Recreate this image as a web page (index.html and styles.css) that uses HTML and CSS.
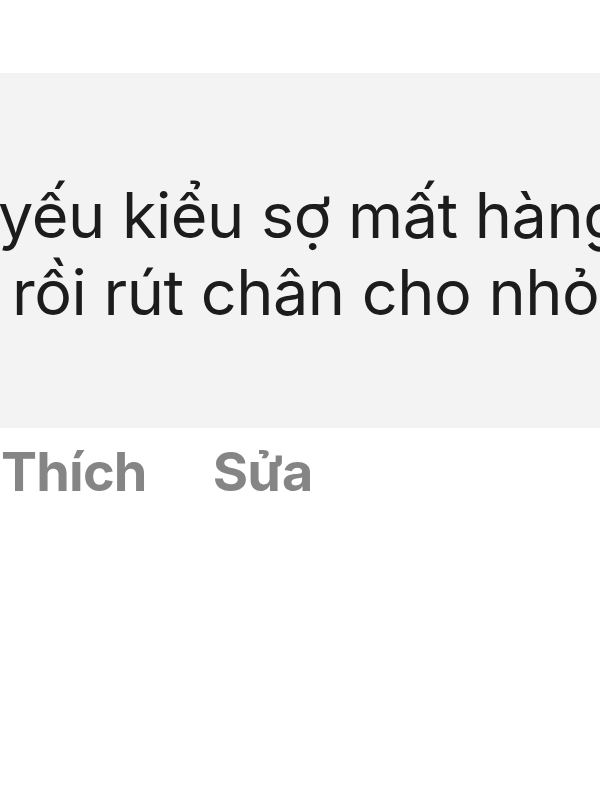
FILE: index.html
```html
<!DOCTYPE html>
<html lang="vi">
<head>
<meta charset="utf-8">
<link rel="stylesheet" href="styles.css">
</head>
<body>
<div class="page">
  <div class="bubble">
    <div class="line line1">yếu kiểu sợ mất hàng</div>
    <div class="line line2">rồi rút chân cho nhỏ</div>
  </div>
  <div class="actions">
    <span class="act">Thích</span>
    <span class="act">Sửa</span>
  </div>
</div>
</body>
</html>
```

FILE: styles.css
```css
html, body {
  margin: 0;
  padding: 0;
  background: #ffffff;
}
.page {
  width: 600px;
  height: 800px;
  overflow: hidden;
  padding-top: 73px;
  box-sizing: border-box;
  font-family: Inter, "Noto Sans", sans-serif;
}
.bubble {
  background: #f3f3f3;
  height: 355px;
  overflow: hidden;
  padding-top: 104px;
  box-sizing: border-box;
}
.line {
  white-space: nowrap;
  font-size: 63px;
  line-height: 77px;
  color: #1c1c1c;
  letter-spacing: -0.5px;
}
.line1 {
  margin-left: -2px;
}
.line2 {
  margin-left: 12px;
}
.actions {
  display: flex;
  gap: 66px;
  padding-left: 1px;
  padding-top: 11px;
}
.act {
  font-size: 54px;
  font-weight: 700;
  color: #858585;
  line-height: 66px;
  letter-spacing: -0.8px;
}
```
